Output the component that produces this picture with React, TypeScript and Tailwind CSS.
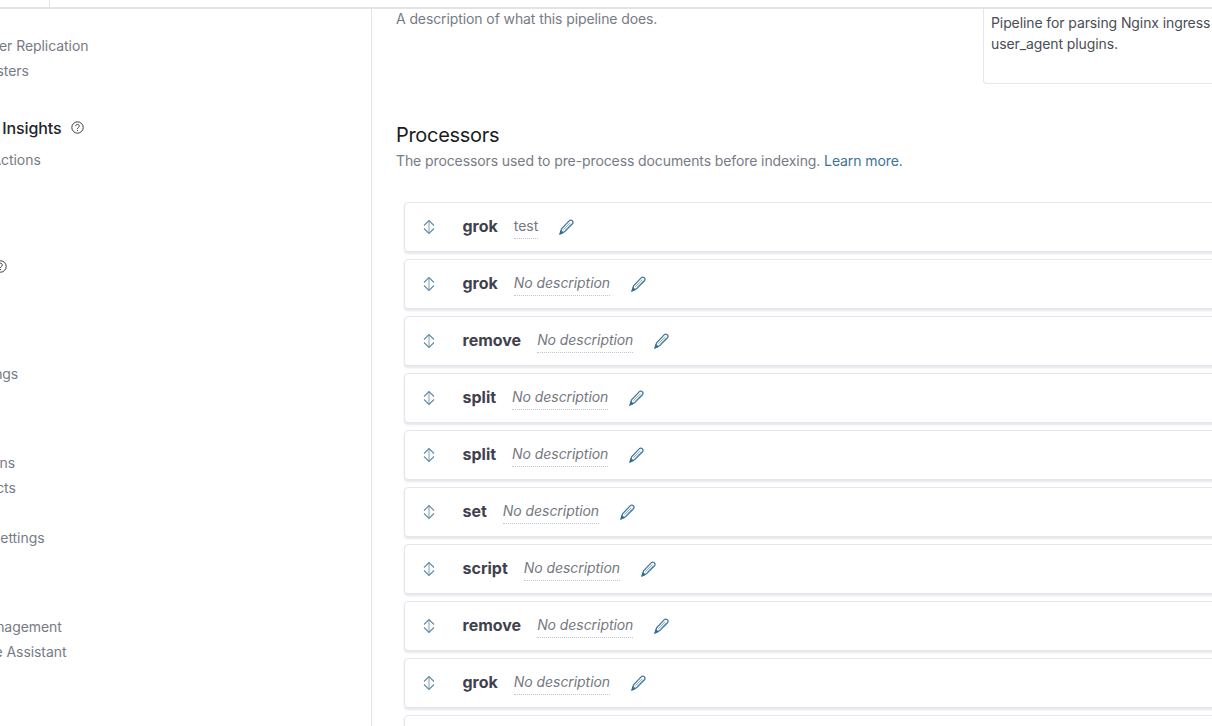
import { ReactNode } from 'react'

const processors = [
  { name: 'grok', description: 'test' },
  { name: 'grok' },
  { name: 'remove' },
  { name: 'split' },
  { name: 'split' },
  { name: 'set' },
  { name: 'script' },
  { name: 'remove' },
  { name: 'grok' },
  { name: 'date' },
]

function HelpIcon() {
  return (
    <svg width="13" height="13" viewBox="0 0 16 16" fill="none" stroke="#343741" strokeWidth="1.2" className="ml-[10px] shrink-0">
      <circle cx="8" cy="8" r="7" />
      <path d="M5.8 6.2c0-1.3 1-2.1 2.2-2.1s2.2.8 2.2 2c0 1.9-2.2 1.7-2.2 3.6" />
      <path d="M8 11.2v1.2" />
    </svg>
  )
}

function SortIcon() {
  return (
    <svg width="12" height="16" viewBox="0 0 12 16" fill="none" stroke="#5f8aa5" strokeWidth="1.1" className="shrink-0">
      <path d="M6 1.5v13" stroke="#8aa6b8" />
      <path d="M1 6.5 6 1.5l5 5" />
      <path d="M1 9.5l5 5 5-5" />
    </svg>
  )
}

function PencilIcon() {
  return (
    <svg width="15" height="16" viewBox="0 0 15 16" fill="none" stroke="#3f7798" strokeWidth="1.25" className="shrink-0">
      <path d="M10.4 1.6a1.9 1.9 0 0 1 2.7 0l.4.4a1.9 1.9 0 0 1 0 2.7L5.8 12.6 1 15l1.6-5.3z" />
      <path d="M4.3 10.8 11.3 3.6M6 11.4l6.4-6.6" strokeWidth="0.8" stroke="#6f98b2" />
      <path d="M2 11.4l2.4 2.4L1 15z" fill="#2f6d92" stroke="#2f6d92" strokeWidth="0.8" />
    </svg>
  )
}

function NavItem({ children }: { children: ReactNode }) {
  return <div className="h-[25px] leading-[25px] tracking-[-0.06px] whitespace-nowrap text-[#777b85]">{children}</div>
}

function NavHeading({ children, help }: { children: ReactNode; help?: boolean }) {
  return (
    <div className="mt-[7px] mb-[7px] flex h-[25px] items-center text-[16px] font-medium tracking-[-0.1px] whitespace-nowrap text-[#23252b]">
      {children}
      {help && <HelpIcon />}
    </div>
  )
}

function ProcessorRow({ name, description }: { name: string; description?: string }) {
  return (
    <div className="flex h-[50px] shrink-0 items-center rounded-[4px] border border-[#e3e6ea] bg-white pl-[18px] shadow-[0_2px_2px_rgba(152,162,179,0.25)]">
      <SortIcon />
      <span className="ml-[27.5px] -translate-y-px text-[16px] font-bold text-[#3f424c]">{name}</span>
      <span
        className={`ml-4 border-b border-dotted border-[#c2c6ce] pb-[2px] text-[14px] leading-[21px] tracking-[-0.06px] text-[#74787f] ${
          description ? '' : 'italic'
        }`}
      >
        {description || 'No description'}
      </span>
      <span className="ml-[21px]">
        <PencilIcon />
      </span>
    </div>
  )
}

export default function App() {
  return (
    <div className="flex h-[726px] w-[1212px] flex-col overflow-hidden bg-white font-['Inter','Liberation_Sans',sans-serif] text-[14px]">
      {/* Top bar */}
      <div className="flex h-[9px] shrink-0 border-b-2 border-[#e2e3e6]">
        <div className="w-[50px] border-r border-[#e2e3e6]" />
      </div>

      <div className="flex min-h-0 flex-1">
        {/* Sidebar, scrolled off the left edge */}
        <aside className="w-[372px] shrink-0 overflow-hidden border-r border-[#e2e3e8] pt-[24px]">
          <nav className="-ml-[79px]">
            <NavItem>Cross-Cluster Replication</NavItem>
            <NavItem>Remote Clusters</NavItem>
            <NavItem>Beats</NavItem>
            <NavHeading help>Alerts and Insights</NavHeading>
            <NavItem>Alerts and Actions</NavItem>
            <NavItem>Reporting</NavItem>
            <NavItem>Jobs</NavItem>
            <NavItem>Watcher</NavItem>
            <NavHeading help>Security</NavHeading>
            <NavItem>Users</NavItem>
            <NavItem>Roles</NavItem>
            <NavItem>API Keys</NavItem>
            <NavItem>Role Mappings</NavItem>
            <NavItem>Tokens</NavItem>
            <NavHeading>Kibana</NavHeading>
            <NavItem>Index Patterns</NavItem>
            <NavItem>Saved Objects</NavItem>
            <NavItem>Tags</NavItem>
            <NavItem>Advanced Settings</NavItem>
            <NavItem>Spaces</NavItem>
            <NavHeading>Stack</NavHeading>
            <NavItem>License Management</NavItem>
            <NavItem>8.0 Upgrade Assistant</NavItem>
          </nav>
        </aside>

        {/* Main content */}
        <main className="min-w-0 flex-1 overflow-hidden pl-[24px] tracking-[-0.1px]">
          <div className="flex h-[75px] items-start">
            <p className="-mt-px w-[587px] shrink-0 leading-[21px] text-[#777b85]">
              A description of what this pipeline does.
            </p>
            <div className="h-[75px] w-[460px] shrink-0 rounded-b-[4px] border-x border-b border-[#e3e6ea] px-[7px] pt-[3px] leading-[21px] whitespace-nowrap text-[#4a4d55]">
              Pipeline for parsing Nginx ingress logs. Requires the geoip and
              <br />
              user_agent plugins.
            </div>
          </div>

          <h2 className="mt-[37px] text-[20px] leading-[28px] font-normal tracking-[-0.3px] text-[#1a1c21]">Processors</h2>
          <p className="mt-[1px] leading-[21px] text-[#777b85]">
            The processors used to pre-process documents before indexing.{' '}
            <span className="text-[#3d7396]">Learn more.</span>
          </p>

          <div className="mt-[31px] ml-[8px] flex w-[900px] flex-col gap-[7px] tracking-normal">
            {processors.map((p, i) => (
              <ProcessorRow key={i} name={p.name} description={p.description} />
            ))}
          </div>
        </main>
      </div>
    </div>
  )
}
